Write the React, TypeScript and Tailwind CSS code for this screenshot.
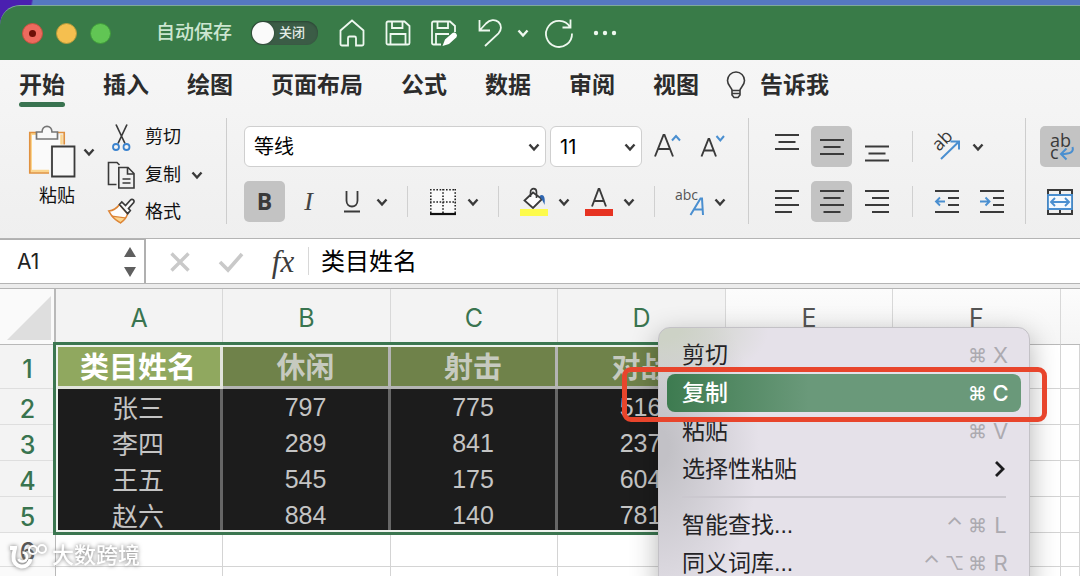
import React from 'react';

const sans = 'font-["Liberation_Sans","Noto_Sans_CJK_SC",sans-serif]';
const ink = '#3a3a3a';
const blue = '#4a8fd0';

type IconProps = { w: number; h: number; children: React.ReactNode; className?: string };

function Icon({ w, h, children, className }: IconProps) {
  return (
    <svg
      width={w}
      height={h}
      viewBox={`0 0 ${w} ${h}`}
      fill="none"
      strokeLinecap="butt"
      strokeLinejoin="miter"
      aria-hidden="true"
      className={'shrink-0 overflow-visible ' + (className ?? '')}
    >
      {children}
    </svg>
  );
}

function Chevron({ color = ink, className }: { color?: string; className?: string }) {
  return (
    <Icon w={12} h={10} className={className}>
      <path d="M1.5 2.5 6 7.5l4.500-5" stroke={color} strokeWidth="2.400" />
    </Icon>
  );
}

function ChevronButton({ label }: { label: string }) {
  return (
    <button type="button" aria-label={label} className="flex h-[41px] w-5 items-center justify-center">
      <Chevron />
    </button>
  );
}

function ToolButton({ label, active, wide, children }: { label: string; active?: boolean; wide?: string; children: React.ReactNode }) {
  return (
    <button
      type="button"
      aria-label={label}
      className={
        'flex h-[41px] shrink-0 items-center rounded-[5px] ' +
        (wide ?? 'w-[41px] justify-center') +
        (active ? ' bg-[#c3c3c3]' : '')
      }
    >
      {children}
    </button>
  );
}

function SmallRule() {
  return <div className="mx-[15px] h-[31px] w-px shrink-0 bg-[#d0d0d0]" />;
}

function GroupRule() {
  return <div className="h-[106px] w-px shrink-0 bg-[#cdcdcd]" />;
}

function TitleBar() {
  return (
    <header className="flex h-[55px] shrink-0 items-center rounded-tl-[20px] border-t border-[#7fa99a] bg-[#397b48] pl-[22px]">
      <div className="flex gap-[13px]">
        <button type="button" aria-label="关闭窗口" className="flex size-[21px] items-center justify-center rounded-full border border-[#c8503f] bg-[#ed6a5e]">
          <span className="size-[7px] rounded-full bg-[#6d1008]" />
        </button>
        <button type="button" aria-label="最小化" className="size-[21px] rounded-full border border-[#b79a3a] bg-[#f5bf4f]" />
        <button type="button" aria-label="缩放" className="size-[21px] rounded-full border border-[#3f9b3a] bg-[#61c554]" />
      </div>
      <label className="ml-[45px] flex items-center text-[19px] font-medium text-[#cde6d1]">
        自动保存
        <input type="checkbox" className="sr-only" />
        <span className="ml-[19px] flex h-6 w-[67px] items-center rounded-full bg-[#3b5c46] pl-px shadow-[inset_0_1px_2px_#2b4434]">
          <span className="size-[22px] rounded-full bg-[#fafafa] shadow-[0_0_2px_#243b2b]" />
          <span className="ml-[5px] text-[13px] text-[#e3ece5]">关闭</span>
        </span>
      </label>
      <div className="ml-[11px] flex items-center">
        <button type="button" aria-label="主页" className="flex w-[46px] justify-center">
          <Icon w={26} h={28}>
            <path d="M1.500 11.500 13 1.500l11.500 10v13.500a1.500 1.500 0 0 1-1.500 1.500h-6v-7.500a1.500 1.500 0 0 0-1.500-1.500h-5a1.500 1.500 0 0 0-1.500 1.500v7.500h-6a1.500 1.500 0 0 1-1.500-1.500z" stroke="#eef8ef" strokeWidth="1.800" />
          </Icon>
        </button>
        <button type="button" aria-label="保存" className="flex w-[46px] justify-center">
          <Icon w={26} h={26}>
            <g stroke="#eef8ef" strokeWidth="1.800">
              <path d="M3 1.500h16.500l5 4.500v17a1.500 1.500 0 0 1-1.500 1.500H3A1.500 1.500 0 0 1 1.500 23V3A1.500 1.500 0 0 1 3 1.500z" />
              <path d="M7 1.500v6.500h10.500v-6.500M5.500 24.500V14h15v10.500" />
            </g>
          </Icon>
        </button>
        <button type="button" aria-label="另存为" className="flex w-[46px] justify-center">
          <Icon w={28} h={28}>
            <g stroke="#eef8ef" strokeWidth="1.800">
              <path d="M11 25.500H3.500A1.500 1.500 0 0 1 2 24V4a1.500 1.500 0 0 1 1.500-1.500H20l5 4.500v6" />
              <path d="M7.500 2.500V9H18V2.500M6 25.500V15h13" />
            </g>
            <path d="M15 20.500 22.500 14a3 3 0 0 1 4 4.200L19 25l-6.500 2z" fill="#fff" />
          </Icon>
        </button>
        <button type="button" aria-label="撤消" className="flex w-[46px] justify-center">
          <Icon w={26} h={30}>
            <path d="M2.500 2v10.500h10.500M2.500 12.500 9 5.500c4-4 9-4.500 12.500-1.500 3.500 3.200 3 8 0 11.300L8 28" stroke="#eef8ef" strokeWidth="1.800" />
          </Icon>
        </button>
        <button type="button" aria-label="撤消选项" className="flex w-5 justify-center">
          <Chevron color="#eef8ef" />
        </button>
        <button type="button" aria-label="重复" className="flex w-[52px] justify-center">
          <Icon w={30} h={30}>
            <path d="M26.500 1.500v8h-8M26 9a13 13 0 1 0 2 6.500" stroke="#eef8ef" strokeWidth="1.800" />
          </Icon>
        </button>
        <button type="button" aria-label="更多" className="flex w-10 justify-center">
          <Icon w={24} h={6}>
            <g fill="#eef8ef">
              <circle cx="3" cy="3" r="2.200" />
              <circle cx="12" cy="3" r="2.200" />
              <circle cx="21" cy="3" r="2.200" />
            </g>
          </Icon>
        </button>
      </div>
    </header>
  );
}

const tabs = ['开始', '插入', '绘图', '页面布局', '公式', '数据', '审阅', '视图'];

function Tabs() {
  return (
    <nav className="flex h-12 shrink-0 items-start gap-[38px] whitespace-nowrap pl-[19px] pt-[9px] text-[23px] leading-8 font-bold text-[#2c2c2c]">
      {tabs.map((t, i) => (
        <a key={t} href="#" className="h-[38px]">
          {t}
          {i === 0 && <span className="mt-px block h-[5px] rounded-full bg-[#397350]" />}
        </a>
      ))}
      <a href="#" className="-ml-[11px] flex items-center gap-[14px]">
        <Icon w={20} h={28}>
          <path d="M6 19.500c0-3-4.500-4.500-4.500-10a8.500 8.500 0 0 1 17 0c0 5.500-4.500 7-4.500 10zM6 19.500v4.500l2 2.500h4l2-2.500v-4.500M6 22.500h8" stroke={ink} strokeWidth="1.600" />
        </Icon>
        告诉我
      </a>
    </nav>
  );
}

function Clipboard() {
  return (
    <div className="flex w-[226px] shrink-0 pl-7 text-[18px] text-[#111]">
      <div className="flex w-[79px] flex-col pt-[7px]">
        <div className="flex items-center gap-[7px]">
          <button type="button" aria-label="粘贴板">
            <Icon w={48} h={54}>
              <path d="M8 9.500H3.500v36.500H21" stroke="#fbd58e" strokeWidth="3" />
              <path d="M4 10h29v11H22v24H4z" fill="#fafafa" />
              <path d="M33.500 9.500v10M4 46h17" stroke="#fbd58e" strokeWidth="2.500" />
              <path d="M8 7.500H1.800v40.500H21M29 7.500h7.200v12" stroke="#e0913f" strokeWidth="1.700" />
              <path d="M8.500 14V7H14c0-7.500 10-7.500 10 0h5.500v7z" fill="#f8f8f8" stroke="#757575" strokeWidth="1.700" />
              <path d="M24 21.500h22.500v30H24z" fill="#f8f8f8" stroke={ink} strokeWidth="1.800" />
            </Icon>
          </button>
          <Chevron />
        </div>
        <span className="pt-[3px] pl-[11px] leading-7">粘贴</span>
      </div>
      <div className="flex flex-col">
        <button type="button" className="flex h-[38px] items-center gap-[10px]">
          <Icon w={28} h={30}>
            <path d="M9 2.500 18 21.500M20 2.500 11 21.500" stroke={ink} strokeWidth="1.700" />
            <circle cx="9" cy="25" r="3" stroke="#3b83ce" strokeWidth="1.800" />
            <circle cx="19.500" cy="25" r="3" stroke="#3b83ce" strokeWidth="1.800" />
          </Icon>
          剪切
        </button>
        <button type="button" className="flex h-[38px] items-center gap-[10px]">
          <Icon w={28} h={28}>
            <path d="M9.500 23.500H1.500V1.500h8.500l2.500 2.500" stroke={ink} strokeWidth="1.600" />
            <path d="M11.800 6.500H21l6 6V27H11.800zM20.500 6.500V13H27M15.500 18h8M15.500 22h8" stroke={ink} strokeWidth="1.600" />
          </Icon>
          复制
          <Chevron />
        </button>
        <button type="button" className="flex h-[36px] items-center gap-[10px]">
          <Icon w={28} h={28}>
            <path d="M12.500 6.500C10 10 6.500 12.500 1.800 13c2.500 5 6 9 11.700 11.800 3.500-2.500 6.200-5.300 7-9z" fill="#fdfdfd" stroke="#dd8435" strokeWidth="1.600" />
            <path d="M5 18.200 18.500 20c-1.500 2-3 3.300-5 4.800C10 23 7.500 21 5 18.200z" fill="#fbd58e" stroke="#dd8435" strokeWidth="1.200" />
            <path d="M12.500 6.500 14.800 4l3.700 3.500 5-5.500a2 2 0 0 1 3 2.800l-5 5.700 1.800 2-2.600 3.200z" fill="#fafafa" stroke={ink} strokeWidth="1.700" />
          </Icon>
          格式
        </button>
      </div>
    </div>
  );
}

function FontGroup() {
  return (
    <div className="flex w-[505px] shrink-0 flex-col gap-[14px] pl-[17px] pt-2">
      <div className="flex items-center">
        <label className="relative flex w-[302px] shrink-0 items-center">
          <span className="sr-only">字体</span>
          <select className="h-[41px] w-full appearance-none rounded-[6px] border border-[#cfcfcf] bg-white pl-[9px] text-[20px] text-black">
            <option>等线</option>
          </select>
          <Chevron className="pointer-events-none absolute right-[6px]" />
        </label>
        <label className="relative ml-1 flex w-[92px] shrink-0 items-center">
          <span className="sr-only">字号</span>
          <select className='h-[41px] w-full appearance-none rounded-[6px] border border-[#cfcfcf] bg-white pl-[9px] font-["Inter",sans-serif] text-[20px] text-black'>
            <option>11</option>
          </select>
          <Chevron className="pointer-events-none absolute right-[6px]" />
        </label>
        <ToolButton label="增大字号" wide="ml-1 w-[44px] justify-center">
          <Icon w={28} h={28}>
            <path d="M1 23.500 9.500 2h1L19 23.500M4.300 16h11.500" stroke={ink} strokeWidth="1.900" />
            <path d="m18 7.500 4-4.500L26 7.500" stroke={blue} strokeWidth="2" />
          </Icon>
        </ToolButton>
        <ToolButton label="减小字号" wide="w-[44px] justify-center">
          <Icon w={26} h={28}>
            <path d="M2.500 23.500 9.500 6h.8L17 23.500M5 17.500h9.500" stroke={ink} strokeWidth="1.900" />
            <path d="m17.500 3 3.800 4.500L25 3" stroke={blue} strokeWidth="2" />
          </Icon>
        </ToolButton>
      </div>
      <div className="flex items-center">
        <ToolButton label="加粗" active>
          <span className='font-["Open_Sans",sans-serif] text-[23px] leading-none font-bold text-[#3a3a3a]'>B</span>
        </ToolButton>
        <ToolButton label="倾斜" wide="w-[47px] justify-center">
          <span className='font-["Liberation_Serif",serif] text-[26px] leading-none text-[#444] italic'>I</span>
        </ToolButton>
        <ToolButton label="下划线" wide="w-10 justify-center">
          <Icon w={18} h={24}>
            <path d="M3.500 1v9.500c0 8 11 8 11 0V1M1 21.500h16" stroke={ink} strokeWidth="1.800" />
          </Icon>
        </ToolButton>
        <ChevronButton label="下划线选项" />
        <SmallRule />
        <ToolButton label="边框" wide="w-10 justify-center">
          <Icon w={28} h={28}>
            <path d="M1 1h26v24H1z" fill="#fafafa" />
            <path d="M1 1.800h26M1.800 1v25M26.200 1v25M14 1v25M1 14h26" stroke="#222" strokeWidth="1.600" strokeDasharray="1.600 1.600" />
            <path d="M1 26h26" stroke="#111" strokeWidth="2.200" />
          </Icon>
        </ToolButton>
        <ChevronButton label="边框选项" />
        <SmallRule />
        <ToolButton label="填充颜色" wide="w-10 justify-center">
          <Icon w={28} h={28}>
            <path d="M13 4.500 4.500 12.500l8.500 7.500 9-9z" fill="#fdfdfd" stroke={ink} strokeWidth="1.800" />
            <path d="M10.500 9V4c0-4.500 6-4.500 6 0v6" stroke={ink} strokeWidth="1.600" />
            <path d="M19.500 8c4.500-3 6 2 5 9-1.500-3.500-2.500-5.500-5-9z" fill="#2f66b0" />
            <path d="M0 21h28v7H0z" fill="#fdfb4c" />
          </Icon>
        </ToolButton>
        <ChevronButton label="填充颜色选项" />
        <ToolButton label="字体颜色" wide="ml-[5px] w-10 justify-center">
          <Icon w={28} h={28}>
            <path d="M7 18.500 13.600 1h.8L21 18.500M9 13h10" stroke={ink} strokeWidth="1.900" />
            <path d="M0 21h28v7H0z" fill="#e63322" />
          </Icon>
        </ToolButton>
        <ChevronButton label="字体颜色选项" />
        <SmallRule />
        <ToolButton label="拼音" wide="w-10 justify-center">
          <Icon w={30} h={30}>
            <text x="0" y="13" fontSize="14" fontFamily="Open Sans" fill="#555">abc</text>
            <path d="m15.500 28 10-16.500h1.500l1 16.500M18.500 22.500h9.500" stroke={blue} strokeWidth="2" />
          </Icon>
        </ToolButton>
        <ChevronButton label="拼音选项" />
      </div>
    </div>
  );
}

function Lines({ d }: { d: string }) {
  return (
    <Icon w={24} h={24}>
      <path d={d} stroke={ink} strokeWidth="1.800" />
    </Icon>
  );
}

function AlignGroup() {
  return (
    <div className="flex w-[276px] shrink-0 flex-col gap-[14px] pl-[17px] pt-2">
      <div className="flex items-center">
        <div className="flex gap-1">
          <ToolButton label="顶端对齐"><Lines d="M0 0h24M3.500 7h17M0 14h24" /></ToolButton>
          <ToolButton label="垂直居中" active><Lines d="M0 5h24M3.500 12h17M0 19h24" /></ToolButton>
          <ToolButton label="底端对齐"><Lines d="M0 11.500h24M3.500 18.500h17M0 25.500h24" /></ToolButton>
        </div>
        <SmallRule />
        <ToolButton label="方向" wide="w-10 justify-center">
          <Icon w={30} h={30}>
            <text x="0" y="0" transform="translate(6 20) rotate(-45)" fontSize="18" fontFamily="Open Sans" fill={ink}>ab</text>
            <path d="M8 27 25.500 10M17.500 9.500h8.500v8" stroke={blue} strokeWidth="2" />
          </Icon>
        </ToolButton>
        <ChevronButton label="方向选项" />
      </div>
      <div className="flex items-center">
        <div className="flex gap-1">
          <ToolButton label="左对齐"><Lines d="M0 1h24M0 8h17M0 15h24M0 22h17" /></ToolButton>
          <ToolButton label="居中" active><Lines d="M0 1h24M3.500 8h17M0 15h24M3.500 22h17" /></ToolButton>
          <ToolButton label="右对齐"><Lines d="M0 1h24M7 8h17M0 15h24M7 22h17" /></ToolButton>
        </div>
        <SmallRule />
        <div className="flex gap-1">
          <ToolButton label="减少缩进">
            <Icon w={26} h={24}>
              <path d="M-1 1h24M12 8h11M12 15h11M-1 22h24" stroke={ink} strokeWidth="1.800" />
              <path d="M9 11.500H.5M4 7.500l-4 4 4 4" stroke={blue} strokeWidth="1.900" />
            </Icon>
          </ToolButton>
          <ToolButton label="增加缩进">
            <Icon w={26} h={24}>
              <path d="M-1 1h24M12 8h11M12 15h11M-1 22h24" stroke={ink} strokeWidth="1.800" />
              <path d="M-1 11.500h9M4.500 7.500l4 4-4 4" stroke={blue} strokeWidth="1.900" />
            </Icon>
          </ToolButton>
        </div>
      </div>
    </div>
  );
}

function WrapGroup() {
  return (
    <div className="flex flex-1 flex-col gap-[14px] pl-[14px] pt-2">
      <ToolButton label="自动换行" active wide="w-[80px] justify-start pl-[10px]">
        <Icon w={26} h={30}>
          <text x="0" y="15" fontSize="18" fontFamily="Open Sans" fill={ink}>ab</text>
          <text x="0" y="27" fontSize="18" fontFamily="Open Sans" fill={ink}>c</text>
          <path d="M22.500 15c1.500 5-2 7-11 7M16.500 16.500 11 22l5.500 5.500" stroke={blue} strokeWidth="2" />
        </Icon>
      </ToolButton>
      <ToolButton label="合并后居中" wide="w-[80px] justify-start pl-[6px]">
        <Icon w={28} h={28}>
          <path d="M2 2h24v24H2zM14 2v5M14 21v5" stroke={ink} strokeWidth="2" />
          <path d="M2 7h24v14H2z" fill="#f4f9fe" stroke={blue} strokeWidth="1.800" />
          <path d="M5.500 14h17M9 10l-4 4 4 4M19 10l4 4-4 4" stroke={blue} strokeWidth="1.900" />
        </Icon>
      </ToolButton>
    </div>
  );
}

function FormulaBar() {
  return (
    <div className="flex h-[46px] shrink-0 items-center border-y border-[#b4b4b4] bg-white">
      <div className="flex h-full w-[146px] shrink-0 items-center justify-between border-t border-r-2 border-[#b0b0b0] pr-[8px] pl-[17px]">
        <input
          aria-label="名称框"
          defaultValue="A1"
          className='w-20 bg-transparent font-["Inter",sans-serif] text-[21px] text-[#222] outline-none'
        />
        <div className="flex flex-col gap-[10px]">
          <button type="button" aria-label="上一个">
            <Icon w={12} h={10} className="block"><path d="M6 0l6 10H0z" fill="#5f5f5f" /></Icon>
          </button>
          <button type="button" aria-label="下一个">
            <Icon w={12} h={10} className="block"><path d="M6 10l6-10H0z" fill="#5f5f5f" /></Icon>
          </button>
        </div>
      </div>
      <button type="button" aria-label="取消" className="ml-6">
        <Icon w={20} h={20}><path d="m1.500 2.500 17 17M18.500 2.500l-17 17" stroke="#c9c9c9" strokeWidth="3.400" /></Icon>
      </button>
      <button type="button" aria-label="输入" className="ml-7">
        <Icon w={26} h={20}><path d="m2 11 8 8L24 3" stroke="#c9c9c9" strokeWidth="3.600" /></Icon>
      </button>
      <button type="button" aria-label="插入函数" className='ml-[25px] w-7 font-["Liberation_Serif",serif] text-[31px] leading-none text-[#3c3c3c] italic'>
        fx
      </button>
      <div className="ml-[11px] h-7 w-px bg-[#d8d8d8]" />
      <input aria-label="编辑栏" defaultValue="类目姓名" className="ml-[12px] min-w-0 flex-1 bg-transparent pt-[2px] text-[24px] text-black outline-none" />
    </div>
  );
}

const columns = ['A', 'B', 'C', 'D', 'E', 'F'];
const heads = ['类目姓名', '休闲', '射击', '对战'];
const data = [
  ['张三', '797', '775', '516'],
  ['李四', '289', '841', '237'],
  ['王五', '545', '175', '604'],
  ['赵六', '884', '140', '781'],
];

function RowHead({ n, on }: { n: number; on: boolean }) {
  return (
    <th
      scope="row"
      className={
        'border-r border-b border-r-[#b9b9b9] border-b-[#dedede] p-0 pt-[6px] text-center font-["Inter",sans-serif] text-[25px] leading-none font-medium ' +
        (on ? 'bg-[#f3f3f3] text-[#39744f]' : 'bg-[#fafafa] text-[#555]')
      }
    >
      {n}
    </th>
  );
}

const blank = 'border-r border-b border-[#d4d4d4] p-0';

function Sheet() {
  return (
    <div className="relative min-h-0 flex-1 overflow-hidden bg-white">
      <table className="w-full min-w-[1080px] table-fixed border-separate border-spacing-0">
        <colgroup>
          <col className="w-[56px]" />
          <col className="w-[167px]" />
          <col className="w-[168px]" />
          <col className="w-[167px]" />
          <col className="w-[168px]" />
          <col className="w-[167px]" />
          <col className="w-[168px]" />
          <col />
        </colgroup>
        <thead>
          <tr className="h-14">
            <th aria-label="全选" className="border-r-2 border-b border-[#b9b9b9] bg-[#fafafa] p-0 align-bottom">
              <Icon w={44} h={44} className="mb-1 ml-[7px] block"><path d="M44 0v44H0z" fill="#dedede" /></Icon>
            </th>
            {columns.map((c, i) => (
              <th
                key={c}
                scope="col"
                className={
                  'border-r border-b border-r-[#d8d8d8] border-b-[#b9b9b9] p-0 pt-[3px] text-center font-["Inter",sans-serif] text-[25px] leading-none font-normal ' +
                  (i < 4 ? 'bg-[#f3f3f3] text-[#39744f]' : 'bg-linear-to-b from-[#fcfcfc] to-[#f5f5f5] text-[#555]')
                }
              >
                {c}
              </th>
            ))}
            <td className="border-b border-[#b9b9b9] bg-linear-to-b from-[#fcfcfc] to-[#f5f5f5] p-0" />
          </tr>
        </thead>
        <tbody>
          <tr className="h-11">
            <RowHead n={1} on />
            {heads.map((h, i) => (
              <td
                key={h}
                className={
                  'border-r-3 border-b-3 p-0 pt-[6px] text-center text-[29px] leading-none font-bold ' +
                  (i === 0
                    ? 'border-[#e2e4dc] bg-[#90a85f] text-white'
                    : 'border-[#b4b4b4] bg-[#6f824a] text-[#c6cabf]')
                }
              >
                {h}
              </td>
            ))}
            <td className={blank} />
            <td className={blank} />
            <td className={blank} />
          </tr>
          {data.map((row, r) => (
            <tr key={row[0]} className="h-9">
              <RowHead n={r + 2} on />
              {row.map((v, i) => (
                <td
                  key={i}
                  className={
                    'border-r-3 border-[#666] bg-[#1c1c1c] p-0 text-center leading-none text-[#c4c4c4] ' +
                    (i === 0 ? 'pt-[3px] text-[26px]' : 'pt-px text-[25px]')
                  }
                >
                  {v}
                </td>
              ))}
              <td className={blank} />
              <td className={blank} />
              <td className={blank} />
            </tr>
          ))}
          {[6, 7].map((n) => (
            <tr key={n} className="h-[34px]">
              <RowHead n={n} on={false} />
              {columns.map((c) => (
                <td key={c} className={blank} />
              ))}
              <td className={blank} />
            </tr>
          ))}
        </tbody>
      </table>
      <div className="pointer-events-none absolute top-[53px] left-[53px] h-[193px] w-[675px] border-3 border-[#3b7650] shadow-[inset_0_0_0_2px_#eef3ee]" />
    </div>
  );
}

function MenuItem({ label, keys, active, sub }: { label: string; keys?: string[]; active?: boolean; sub?: boolean }) {
  return (
    <button
      type="button"
      role="menuitem"
      className={
        'mx-2 flex h-[38px] items-center justify-between rounded-[8px] pr-[9px] pl-[15px] text-[23px] leading-none ' +
        (active
          ? 'bg-linear-to-r from-[#3d7b50] via-[#6a997a] via-40% to-[#6a997a] font-medium text-white'
          : 'text-[#242326]')
      }
    >
      <span>{label}</span>
      <span className={'flex ' + (active ? 'text-white' : 'text-[#acaab0]')}>
        {keys?.map((k) => (
          <kbd
            key={k}
            className={
              'flex w-[23px] items-center justify-center font-["Inter","DejaVu_Sans",sans-serif] ' +
              (k === '⌘' || k === '⌥' ? 'text-[19px]' : 'text-[22px]')
            }
          >
            {k}
          </kbd>
        ))}
        {sub && (
          <Icon w={12} h={18} className="mr-[6px]">
            <path d="m2 2 7 7-7 7" stroke="#1c1c1e" strokeWidth="2.800" />
          </Icon>
        )}
      </span>
    </button>
  );
}

function ContextMenu() {
  return (
    <div
      role="menu"
      className="absolute top-[327px] left-[658px] flex w-[372px] flex-col rounded-[12px] border border-[#c3c1c6] bg-[#e5e1e9] bg-[radial-gradient(ellipse_110px_60px_at_0%_0%,#cdd2c6_20%,transparent),radial-gradient(ellipse_100px_170px_at_0%_45%,#c2c1c6_10%,transparent)] pt-2 pb-3 shadow-[0_8px_28px_rgba(0,0,0,0.3)]"
    >
      <MenuItem label="剪切" keys={['⌘', 'X']} />
      <MenuItem label="复制" keys={['⌘', 'C']} active />
      <MenuItem label="粘贴" keys={['⌘', 'V']} />
      <MenuItem label="选择性粘贴" sub />
      <div role="separator" className="mx-[23px] my-2 h-[2px] bg-[#cbc8cf]" />
      <MenuItem label="智能查找..." keys={['⌃', '⌘', 'L']} />
      <MenuItem label="同义词库..." keys={['⌃', '⌥', '⌘', 'R']} />
    </div>
  );
}

function Watermark() {
  return (
    <div className="pointer-events-none absolute bottom-[6px] left-[8px] flex items-center gap-[4px] text-[22px] leading-none font-medium text-white drop-shadow-[0_0_2px_#777]">
      <Icon w={40} h={28}>
        <path d="M2 6h5c0 2-1.500 4-1.500 9a8.500 8.500 0 0 0 17 2" stroke="#fff" strokeWidth="4" />
        <path d="M10.500 17a4.500 4.500 0 1 0 4-6.500" stroke="#fff" strokeWidth="2.500" />
        <circle cx="25" cy="8" r="4" stroke="#fff" strokeWidth="2" />
        <circle cx="34" cy="7" r="4" stroke="#fff" strokeWidth="2" />
      </Icon>
      大数跨境
    </div>
  );
}

export default function App() {
  return (
    <div className={'relative flex h-screen w-full flex-col overflow-hidden bg-[linear-gradient(100deg,#4a1fb0_31px,#5578c0_33px)] pt-[5px] ' + sans}>
      <TitleBar />
      <div className="shrink-0 bg-linear-to-b from-[#f6f6f6] to-[#efefef]">
        <Tabs />
        <div className="flex overflow-hidden pt-[10px] pb-[8px]">
          <Clipboard />
          <GroupRule />
          <FontGroup />
          <div className="ml-4 flex min-w-0 flex-1">
            <GroupRule />
            <AlignGroup />
            <GroupRule />
            <WrapGroup />
          </div>
        </div>
      </div>
      <FormulaBar />
      <div className="h-[5px] shrink-0 border-b border-[#b4b4b4] bg-[#ececec]" />
      <Sheet />
      <ContextMenu />
      <div className="pointer-events-none absolute top-[367px] left-[622px] h-[55px] w-[425px] rounded-[9px] border-5 border-[#e8452c]" />
      <Watermark />
    </div>
  );
}
